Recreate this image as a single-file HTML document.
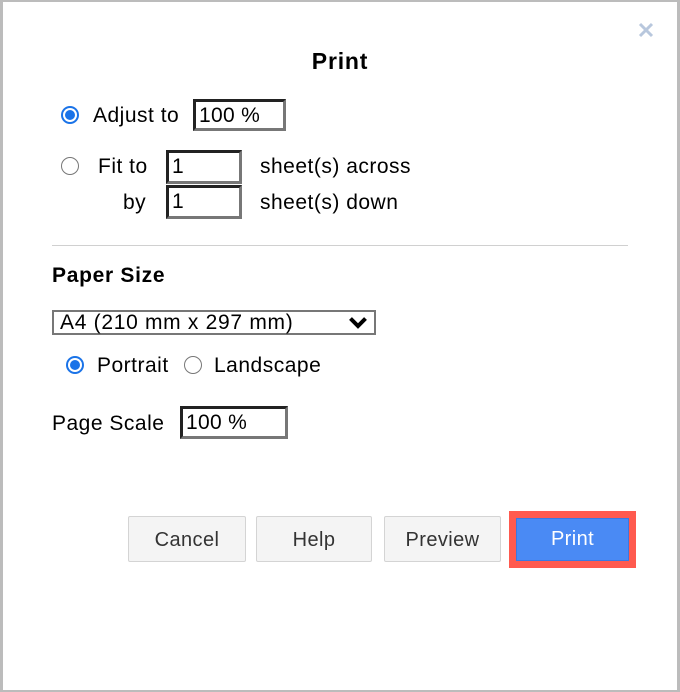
<!DOCTYPE html>
<html><head><style>
*{margin:0;padding:0;box-sizing:border-box}
body{width:680px;height:692px;background:#fff;font-family:"Liberation Sans",Arial,sans-serif;color:#000;position:relative;overflow:hidden}
.frame{position:absolute;left:0;top:0;width:680px;height:692px;border:2px solid #bcbcbc;border-right-width:3px;border-left-width:3px}
.a{position:absolute;white-space:nowrap}
.t{font-size:21px;line-height:24px;letter-spacing:0.5px}
.inp{position:absolute;border:3px solid;border-color:#222 #777 #777 #222;font-size:21px;line-height:24px;padding-left:3px;padding-top:2px;letter-spacing:0.3px}
.radio{position:absolute;width:18px;height:18px;border-radius:50%;border:1.5px solid #777;background:#fff}
.radio.on{border:none;background:#1a73e8}
.radio.on::before{content:"";position:absolute;left:2px;top:2px;width:14px;height:14px;border-radius:50%;background:#fff}
.radio.on i{position:absolute;left:4px;top:4px;width:10px;height:10px;border-radius:50%;background:#1a73e8;z-index:1}
.btn{position:absolute;top:516px;height:46px;border:1px solid #d4d4d4;border-radius:2px;background:#f4f4f4;color:#333;font-size:20px;line-height:46px;text-align:center;letter-spacing:0.4px}
</style></head><body>
<div class="frame"></div>
<svg class="a" style="left:638px;top:22px" width="16" height="16" viewBox="0 0 16 16"><path d="M2 2L14 14M14 2L2 14" stroke="#b8c7dd" stroke-width="3"/></svg>
<div class="a" style="left:0;width:680px;text-align:center;top:48px;font-size:23px;font-weight:bold;line-height:26px;letter-spacing:0.8px">Print</div>

<div class="radio on" style="left:61px;top:106px"><i></i></div>
<div class="a t" style="left:93px;top:104px">Adjust to</div>
<div class="inp" style="left:193px;top:99px;width:93px;height:32px">100 %</div>

<div class="radio" style="left:61px;top:157px"></div>
<div class="a t" style="left:98px;top:155px">Fit to</div>
<div class="inp" style="left:166px;top:150px;width:76px;height:34px">1</div>
<div class="a t" style="left:260px;top:155px">sheet(s) across</div>
<div class="a t" style="left:123px;top:191px">by</div>
<div class="inp" style="left:166px;top:185px;width:76px;height:34px">1</div>
<div class="a t" style="left:260px;top:191px">sheet(s) down</div>

<div class="a" style="left:52px;top:245px;width:576px;height:1px;background:#d0d0d0"></div>
<div class="a" style="left:52px;top:264px;font-size:21px;font-weight:bold;line-height:24px;letter-spacing:0.7px">Paper Size</div>

<div class="a" style="left:52px;top:310px;width:324px;height:25px;border:2px solid #777;font-size:21px;line-height:21px;padding-left:6px;letter-spacing:0.7px">A4 (210 mm x 297 mm)
<svg style="position:absolute;right:6px;top:4px" width="20" height="13" viewBox="0 0 20 13"><path d="M2.5 2.5L10 10L17.5 2.5" stroke="#000" stroke-width="4" fill="none"/></svg></div>

<div class="radio on" style="left:66px;top:356px"><i></i></div>
<div class="a t" style="left:97px;top:354px">Portrait</div>
<div class="radio" style="left:184px;top:356px"></div>
<div class="a t" style="left:214px;top:354px">Landscape</div>

<div class="a t" style="left:52px;top:412px">Page Scale</div>
<div class="inp" style="left:180px;top:406px;width:108px;height:33px">100 %</div>

<div class="btn" style="left:128px;width:118px">Cancel</div>
<div class="btn" style="left:256px;width:116px">Help</div>
<div class="btn" style="left:384px;width:117px">Preview</div>
<div class="a" style="left:509px;top:511px;width:127px;height:57px;background:#ff5a4f"></div>
<div class="a" style="left:516px;top:518px;width:113px;height:43px;background:#4a8af4;border:1px solid #3b78e0;color:#fff;font-size:20px;line-height:41px;text-align:center;letter-spacing:0.4px">Print</div>
</body></html>
